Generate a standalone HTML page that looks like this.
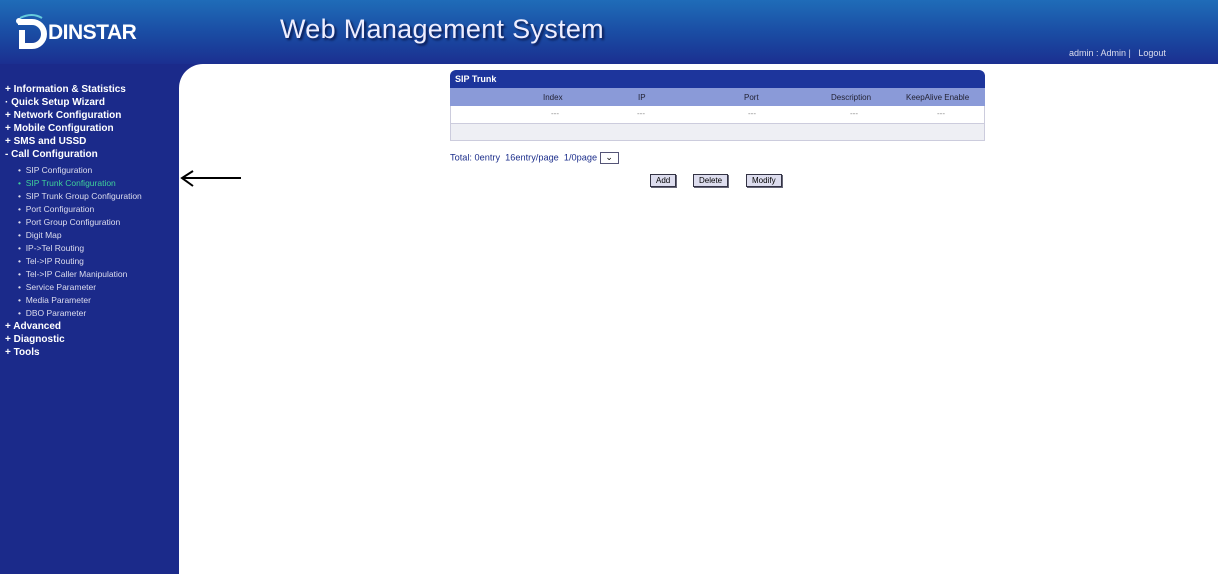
<!DOCTYPE html>
<html><head><meta charset="utf-8"><style>
*{margin:0;padding:0;box-sizing:border-box}
body{width:1218px;height:574px;overflow:hidden;font-family:"Liberation Sans",sans-serif;background:#1b2a8a;position:relative}
#hdr{position:absolute;left:0;top:0;width:1218px;height:64px;background:linear-gradient(#1f6cb8,#1a4aa2 55%,#1b2f90)}
#side{position:absolute;left:0;top:64px;width:180px;height:510px;background:#1b2a8a}
#main{position:absolute;left:179px;top:64px;width:1039px;height:510px;background:#fff;border-top-left-radius:24px}
.title{position:absolute;left:280px;top:14px;font-size:27px;color:#eef;text-shadow:2px 2px 2px #0b1a50;letter-spacing:0.3px}
.logo{position:absolute;left:48px;top:21px;font-size:21px;font-weight:bold;color:#fff;letter-spacing:-0.5px}
.user{position:absolute;left:1069px;top:48px;font-size:9px;color:#dde}
.m{position:absolute;left:5px;font-size:10px;font-weight:bold;color:#fff;white-space:nowrap}
.s{position:absolute;left:18px;font-size:8.5px;color:#dde;white-space:nowrap}
</style></head><body>
<div id="hdr">
<svg style="position:absolute;left:12px;top:12px" width="40" height="40" viewBox="0 0 40 40"><path d="M6 10 H20 A12 12 0 0 1 20 34 H10 V18" fill="none" stroke="#fff" stroke-width="6"/><circle cx="7" cy="9" r="3" fill="#fff"/><path d="M8 6 Q20 0 30 6" stroke="#6cd" stroke-width="2" fill="none"/></svg>
<div class="logo">DINSTAR</div>
<div class="title">Web Management System</div>
<div class="user">admin : Admin |&nbsp;&nbsp; Logout</div>
</div>
<div id="side">
<div class="m" style="top:20px">+ Information &amp; Statistics</div>
<div class="m" style="top:33px">· Quick Setup Wizard</div>
<div class="m" style="top:46px">+ Network Configuration</div>
<div class="m" style="top:59px">+ Mobile Configuration</div>
<div class="m" style="top:72px">+ SMS and USSD</div>
<div class="m" style="top:85px">- Call Configuration</div>
<div class="s" style="top:101px">• &nbsp;SIP Configuration</div>
<div class="s" style="top:114px;color:#3fd19a">• &nbsp;SIP Trunk Configuration</div>
<div class="s" style="top:127px">• &nbsp;SIP Trunk Group Configuration</div>
<div class="s" style="top:140px">• &nbsp;Port Configuration</div>
<div class="s" style="top:153px">• &nbsp;Port Group Configuration</div>
<div class="s" style="top:166px">• &nbsp;Digit Map</div>
<div class="s" style="top:179px">• &nbsp;IP-&gt;Tel Routing</div>
<div class="s" style="top:192px">• &nbsp;Tel-&gt;IP Routing</div>
<div class="s" style="top:205px">• &nbsp;Tel-&gt;IP Caller Manipulation</div>
<div class="s" style="top:218px">• &nbsp;Service Parameter</div>
<div class="s" style="top:231px">• &nbsp;Media Parameter</div>
<div class="s" style="top:244px">• &nbsp;DBO Parameter</div>
<div class="m" style="top:257px">+ Advanced</div>
<div class="m" style="top:270px">+ Diagnostic</div>
<div class="m" style="top:283px">+ Tools</div>
</div>
<div id="main">
<svg style="position:absolute;left:0;top:106px" width="64" height="20"><path d="M62 8 H4 M14 1 L3 8 L14 16" stroke="#000" stroke-width="2" fill="none"/></svg>
<div style="position:absolute;left:271px;top:6px;width:535px">
<div style="background:#1d359c;color:#fff;font-size:9px;font-weight:bold;height:18px;line-height:18px;padding-left:5px;border-radius:6px 6px 0 0">SIP Trunk</div>
<div style="background:#8a9ad8;height:18px;font-size:8px;color:#223;position:relative">
<span style="position:absolute;left:93px;top:5px">Index</span><span style="position:absolute;left:188px;top:5px">IP</span><span style="position:absolute;left:294px;top:5px">Port</span><span style="position:absolute;left:381px;top:5px">Description</span><span style="position:absolute;left:456px;top:5px">KeepAlive Enable</span></div>
<div style="height:18px;border:1px solid #ccd;border-top:none;font-size:8px;color:#888;position:relative;background:#fff">
<span style="position:absolute;left:100px;top:3px">---</span><span style="position:absolute;left:186px;top:3px">---</span><span style="position:absolute;left:297px;top:3px">---</span><span style="position:absolute;left:399px;top:3px">---</span><span style="position:absolute;left:486px;top:3px">---</span></div>
<div style="height:17px;background:#eeeff4;border:1px solid #ccd;border-top:none"></div>
</div>
<div style="position:absolute;left:271px;top:88px;font-size:9.2px;color:#1d2f8c;white-space:nowrap">Total: 0entry &nbsp;16entry/page &nbsp;1/0page <span style="display:inline-block;width:19px;height:12px;border:1px solid #557;vertical-align:middle;text-align:center;font-size:9px;line-height:9px;color:#000">⌄</span></div>
<div style="position:absolute;top:110px;left:471px;font-size:8px;height:13px;line-height:11px;border:1px solid #334;background:#dde;padding:0 5px;box-shadow:1px 1px 0 #667">Add</div>
<div style="position:absolute;top:110px;left:514px;font-size:8px;height:13px;line-height:11px;border:1px solid #334;background:#dde;padding:0 5px;box-shadow:1px 1px 0 #667">Delete</div>
<div style="position:absolute;top:110px;left:567px;font-size:8px;height:13px;line-height:11px;border:1px solid #334;background:#dde;padding:0 5px;box-shadow:1px 1px 0 #667">Modify</div>
</div>
</body></html>
